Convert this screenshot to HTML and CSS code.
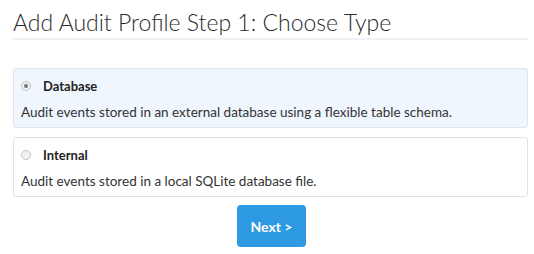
FILE: index.html
```html
<!DOCTYPE html>
<html>
<head>
<meta charset="utf-8">
<link rel="stylesheet" href="styles.css">
</head>
<body>
<div class="page">
  <h1 class="title">Add Audit Profile Step 1: Choose Type</h1>
  <div class="options">
    <label class="card card-selected">
      <span class="card-head"><span class="radio radio-on"></span><span class="card-name">Database</span></span>
      <span class="card-desc">Audit events stored in an external database using a flexible table schema.</span>
    </label>
    <label class="card">
      <span class="card-head"><span class="radio"></span><span class="card-name">Internal</span></span>
      <span class="card-desc">Audit events stored in a local SQLite database file.</span>
    </label>
  </div>
  <div class="actions">
    <button class="btn-next">Next &gt;</button>
  </div>
</div>
</body>
</html>
```
FILE: styles.css
```css
html, body {
  margin: 0;
  padding: 0;
  background: #ffffff;
}
body {
  font-family: Lato, "Open Sans", sans-serif;
  color: #333333;
}
.page {
  padding: 8px 6px 0 13px;
  width: 515px;
}
.title {
  margin: 0;
  font-weight: 300;
  font-size: 23px;
  line-height: 28px;
  color: #2b2b2b;
  padding-bottom: 2px;
  border-bottom: 2px solid #eef3f8;
}
.options {
  margin-top: 28px;
  display: flex;
  flex-direction: column;
  gap: 9px;
}
.card {
  display: flex;
  flex-direction: column;
  border: 1px solid #e2e2e2;
  border-radius: 3px;
  background: #ffffff;
  padding: 8px 7px 6px 7px;
  height: 60px;
  box-sizing: border-box;
}
.card-selected {
  background: #eff6fe;
  border-color: #dde6ef;
}
.card-head {
  display: flex;
  align-items: center;
  height: 20px;
}
.radio {
  width: 8px;
  height: 8px;
  border: 1px solid #c4c4c4;
  border-radius: 50%;
  background: #f0f0f0;
  margin-left: 0;
  margin-right: 12px;
  position: relative;
}
.radio-on::after {
  content: "";
  position: absolute;
  left: 2px;
  top: 2px;
  width: 4px;
  height: 4px;
  border-radius: 50%;
  background: #777777;
}
.card-name {
  font-weight: 700;
  font-size: 13px;
  color: #222222;
}
.card-desc {
  margin-top: 8px;
  font-size: 13.5px;
  line-height: 18px;
  color: #333333;
}
.actions {
  display: flex;
  justify-content: center;
  padding-top: 8px;
}
.btn-next {
  width: 69px;
  height: 42px;
  border: none;
  border-radius: 4px;
  background: #2d9ae3;
  color: #ffffff;
  font-family: Lato, "Open Sans", sans-serif;
  font-weight: 700;
  font-size: 14px;
  margin-left: 2px;
}
```
